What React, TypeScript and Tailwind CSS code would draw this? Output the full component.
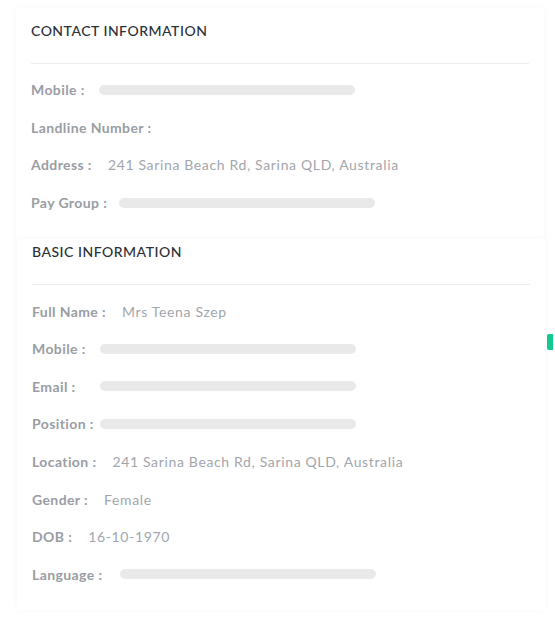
const contactRows: { label: string; value?: string; bar?: boolean; labelW?: string }[] = [
  { label: "Mobile :", bar: true, labelW: "w-[68px]" },
  { label: "Landline Number :" },
  { label: "Address :", value: "241 Sarina Beach Rd, Sarina QLD, Australia" },
  { label: "Pay Group :", bar: true, labelW: "w-[88px]" },
];

const basicRows: { label: string; value?: string; bar?: boolean; labelW?: string }[] = [
  { label: "Full Name :", value: "Mrs Teena Szep" },
  { label: "Mobile :", bar: true, labelW: "w-[68px]" },
  { label: "Email :", bar: true, labelW: "w-[68px]" },
  { label: "Position :", bar: true, labelW: "w-[68px]" },
  { label: "Location :", value: "241 Sarina Beach Rd, Sarina QLD, Australia" },
  { label: "Gender :", value: "Female" },
  { label: "DOB :", value: "16-10-1970" },
  { label: "Language :", bar: true, labelW: "w-[88px]" },
];

function Row({ label, value, bar, labelW }: { label: string; value?: string; bar?: boolean; labelW?: string }) {
  return (
    <div className="flex h-[37.6px] items-center text-[14px]">
      <span className={`${labelW ?? ""} shrink-0 whitespace-nowrap font-bold tracking-[0.4px] text-[#999da4]`}>{label}</span>
      {bar && <div className="h-[10px] w-[256px] rounded-full bg-[#e9e9ea]" />}
      {value && <span className="ml-4 tracking-[0.65px] text-[#a2a6ac]">{value}</span>}
    </div>
  );
}

function Card({ title, rows, className }: { title: string; rows: typeof contactRows; className: string }) {
  return (
    <div className={`relative bg-white px-[15px] shadow-[0_0_8px_rgba(40,40,90,0.035)] ${className}`}>
      <div className="pb-[22px] text-[14px] font-medium leading-5 tracking-[0.5px] text-[#2b2f36]">{title}</div>
      <div className="h-px bg-[#ececee]" />
      <div className="pt-[7px]">
        {rows.map((r) => (
          <Row key={r.label} {...r} />
        ))}
      </div>
    </div>
  );
}

export default function App() {
  return (
    <div className="relative h-[621px] w-[555px] overflow-hidden bg-white font-['Lato',sans-serif]">
      <div className="flex flex-col pt-2">
        <Card title="CONTACT INFORMATION" rows={contactRows} className="ml-[16px] w-[528px] pt-[13px] pb-[23px]" />
        <Card title="BASIC INFORMATION" rows={basicRows} className="-mt-[5px] ml-[17px] w-[528px] pt-[3px] pb-[17px]" />
      </div>
      <div className="absolute left-[547px] top-[334px] h-[16px] w-[6px] rounded-l-[2px] bg-[#12c98f]" />
    </div>
  );
}
